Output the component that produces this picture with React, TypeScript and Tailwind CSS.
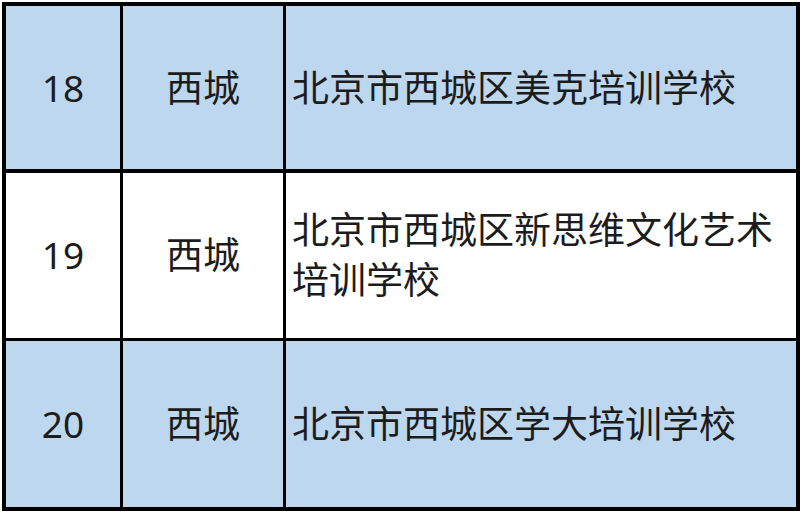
import React from "react";

type Row = { no: string; district: string; name: string; blue: boolean };

const rows: Row[] = [
    { no: "18", district: "西城", name: "北京市西城区美克培训学校", blue: true },
    { no: "19", district: "西城", name: "北京市西城区新思维文化艺术培训学校", blue: false },
    { no: "20", district: "西城", name: "北京市西城区学大培训学校", blue: true },
];

export default function App() {
    return (
        <div
            className="w-[800px] h-[514px] bg-white overflow-hidden pt-[2px] pl-[2px]"
            style={{ fontFamily: '"Noto Sans", "Noto Sans CJK SC", sans-serif' }}
        >
            <div className="w-[798px] bg-black p-[4px] grid grid-cols-[114px_160px_1fr] grid-rows-[163px_165px_166px] gap-x-[3px] gap-y-[3.5px] text-[37px] text-[#1c1c1c]">
                {rows.map((r) => {
                    const bg = r.blue ? "bg-[#bdd7ee]" : "bg-white";
                    return (
                        <React.Fragment key={r.no}>
                            <div className={`${bg} flex items-center justify-center`}>{r.no}</div>
                            <div className={`${bg} flex items-center justify-center`}>{r.district}</div>
                            <div className={`${bg} flex items-center pl-[6px] pr-[10px] leading-[50px]`}>
                                <span>{r.name}</span>
                            </div>
                        </React.Fragment>
                    );
                })}
            </div>
        </div>
    );
}
